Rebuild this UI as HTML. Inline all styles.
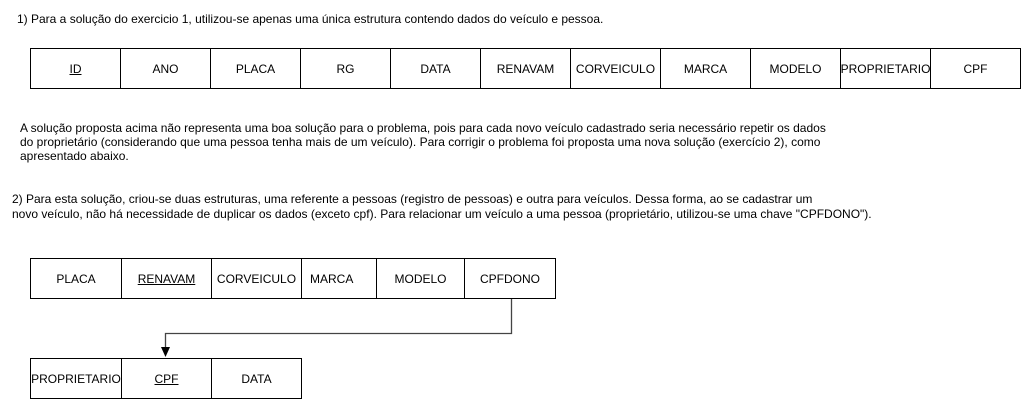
<!DOCTYPE html>
<html><head><meta charset="utf-8"><style>
body{margin:0;width:1031px;height:410px;background:#fff;position:relative;font-family:"Liberation Sans",Arial,sans-serif;font-size:12px;color:#000;overflow:hidden}
.t{position:absolute;white-space:nowrap;line-height:14px}
.c{position:absolute;border:1px solid #000;box-sizing:border-box;display:flex;align-items:center;justify-content:center;font-size:12px;white-space:nowrap;overflow:visible}
u{text-decoration:underline}
</style></head><body>
<div class="t" style="left:17px;top:12px">1) Para a solução do exercicio 1, utilizou-se apenas uma única estrutura contendo dados do veículo e pessoa.</div>

<div class="c" style="left:30px;top:48px;width:91px;height:41px"><u>ID</u></div>
<div class="c" style="left:120px;top:48px;width:91px;height:41px">ANO</div>
<div class="c" style="left:210px;top:48px;width:91px;height:41px">PLACA</div>
<div class="c" style="left:300px;top:48px;width:91px;height:41px">RG</div>
<div class="c" style="left:390px;top:48px;width:91px;height:41px">DATA</div>
<div class="c" style="left:480px;top:48px;width:91px;height:41px">RENAVAM</div>
<div class="c" style="left:570px;top:48px;width:91px;height:41px">CORVEICULO</div>
<div class="c" style="left:660px;top:48px;width:91px;height:41px">MARCA</div>
<div class="c" style="left:750px;top:48px;width:91px;height:41px">MODELO</div>
<div class="c" style="left:840px;top:48px;width:91px;height:41px">PROPRIETARIO</div>
<div class="c" style="left:930px;top:48px;width:91px;height:41px">CPF</div>

<div class="t" style="left:20px;top:121px">A solução proposta acima não representa uma boa solução para o problema, pois para cada novo veículo cadastrado seria necessário repetir os dados</div>
<div class="t" style="left:20px;top:135px">do proprietário (considerando que uma pessoa tenha mais de um veículo). Para corrigir o problema foi proposta uma nova solução (exercício 2), como</div>
<div class="t" style="left:20px;top:149px">apresentado abaixo.</div>

<div class="t" style="left:12px;top:192px">2) Para esta solução, criou-se duas estruturas, uma referente a pessoas (registro de pessoas) e outra para veículos. Dessa forma, ao se cadastrar um</div>
<div class="t" style="left:12px;top:207px">novo veículo, não há necessidade de duplicar os dados (exceto cpf). Para relacionar um veículo a uma pessoa (proprietário, utilizou-se uma chave  "CPFDONO").</div>

<div class="c" style="left:30px;top:258px;width:92px;height:41px">PLACA</div>
<div class="c" style="left:121px;top:258px;width:91px;height:41px"><u>RENAVAM</u></div>
<div class="c" style="left:211px;top:258px;width:91px;height:41px">CORVEICULO</div>
<div class="c" style="left:301px;top:258px;width:76px;height:41px;justify-content:flex-start;padding-left:8px">MARCA</div>
<div class="c" style="left:376px;top:258px;width:89px;height:41px">MODELO</div>
<div class="c" style="left:464px;top:258px;width:92px;height:41px">CPFDONO</div>

<div class="c" style="left:30px;top:358px;width:92px;height:41px">PROPRIETARIO</div>
<div class="c" style="left:121px;top:358px;width:91px;height:41px"><u>CPF</u></div>
<div class="c" style="left:211px;top:358px;width:91px;height:41px">DATA</div>

<svg style="position:absolute;left:0;top:0" width="1031" height="410">
<path d="M511.5 299 V333.5 H165.5 V348" fill="none" stroke="#444" stroke-width="1.3"/>
<path d="M161 347 L170 347 L165.5 357 Z" fill="#000"/>
</svg>
</body></html>
